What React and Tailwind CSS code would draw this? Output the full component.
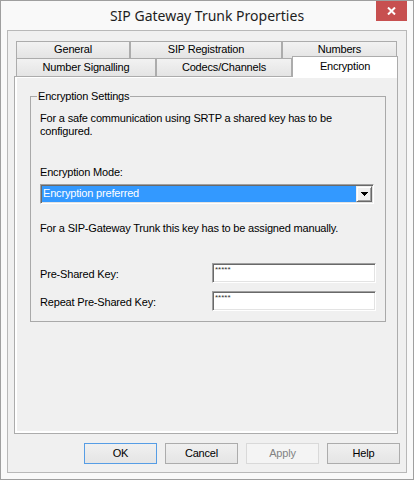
import React from "react"

const sunken =
  "border border-t-[#a0a0a0] border-l-[#a0a0a0] border-r-white border-b-white shadow-[inset_1px_1px_0_#696969,inset_-1px_-1px_0_#e3e3e3]"

const BackTab = ({ label, className }) => (
  <div
    className={`flex justify-center border-x border-t border-[#acacac] bg-linear-to-b from-[#f2f2f2] to-[#e4e4e4] ${className}`}
  >
    {label}
  </div>
)

const KeyField = ({ label, className }) => (
  <div className={`flex items-center justify-between ${className}`}>
    <span className="pt-[3px]">{label}</span>
    <div className={`w-[164px] h-[20px] bg-white pl-[2px] pt-[2px] text-[8px] leading-none tracking-normal text-[#333] ${sunken}`}>
      *****
    </div>
  </div>
)

const DlgButton = ({ label, tone = "normal" }) => {
  const tones = {
    normal: "border-[#acacac] bg-linear-to-b from-[#f0f0f0] to-[#e5e5e5] text-black",
    primary: "border-[#569de5] bg-linear-to-b from-[#f0f0f0] to-[#e5e5e5] text-black",
    disabled: "border-[#d9d9d9] bg-[#f4f4f4] text-[#838383]",
  }
  return (
    <button className={`w-[73px] h-[21px] border flex items-center justify-center ${tones[tone]}`}>
      {label}
    </button>
  )
}

export default function App() {
  return (
    <div className="w-[414px] h-[480px] border border-[#9f9f9f] bg-[#f9f9f9] flex flex-col font-['Liberation_Sans',Arial,sans-serif] text-[11px] leading-[13px] text-black tracking-[-0.18px]">
      {/* title bar */}
      <div className="h-[29px] grid grid-cols-[1fr_auto_1fr]">
        <div />
        <div className="font-['Noto_Sans',sans-serif] text-[14px] leading-[30px] text-[#1e1e1e] tracking-normal">
          SIP Gateway Trunk Properties
        </div>
        <div className="flex justify-end items-start pr-[6px]">
          <button className="w-[31px] h-[20px] bg-[#c75050] flex items-center justify-center">
            <svg width="9" height="8" viewBox="0 0 9 8">
              <path d="M1 0.5 L8 7.5 M8 0.5 L1 7.5" stroke="#fff" strokeWidth="2" />
            </svg>
          </button>
        </div>
      </div>

      {/* client area */}
      <div className="flex-1 mx-[6px] mb-[6px] border border-[#b8b8b8] bg-[#f0f0f0] flex flex-col px-[6px] pt-[10px]">
        {/* tabs */}
        <div className="flex ml-[2px] h-[17px]">
          <BackTab label="General" className="w-[114px] pt-[1px]" />
          <BackTab label="SIP Registration" className="w-[152px] pt-[1px]" />
          <BackTab label="Numbers" className="w-[115px] pt-[1px]" />
        </div>
        <div className="flex ml-[2px] h-[18px]">
          <BackTab label="Number Signalling" className="w-[140px] h-[18px] pt-[2px]" />
          <BackTab label="Codecs/Channels" className="w-[136px] h-[18px] pt-[2px]" />
          <div className="relative z-10 -mt-[2px] w-[106px] h-[21px] flex justify-center pt-[3px] bg-white border-x border-t border-[#acacac]">
            Encryption
          </div>
        </div>

        {/* tab page */}
        <div className="w-[384px] h-[358px] border border-[#acacac] bg-[#f0f0f0] shadow-[inset_2px_0_0_#fff,inset_0_-2px_0_#fff,inset_0_1px_0_#fff] pt-[19px] pl-[15px]">
          <div className="w-[356px] border border-[#a9a9a9] pb-[10px]">
            <div className="-mt-[7px] ml-[6px] px-[1px] w-fit bg-[#f0f0f0]">Encryption Settings</div>
            <div className="px-[9px]">
              <p className="mt-[9px]">
                For a safe communication using SRTP a shared key has to be
                <br />
                configured.
              </p>
              <div className="mt-[28px]">Encryption Mode:</div>
              <div className={`mt-[5px] w-[334px] h-[20px] bg-white p-[1px] flex ${sunken}`}>
                <div className="flex-1 bg-[#3399ff] text-white pl-[1px] pt-[1px]">Encryption preferred</div>
                <div className="w-[16px] bg-[#f0f0f0] border border-t-[#f0f0f0] border-l-[#f0f0f0] border-r-[#696969] border-b-[#696969] shadow-[inset_1px_1px_0_#fff,inset_-1px_-1px_0_#a0a0a0] flex items-center justify-center">
                  <svg width="7" height="4" viewBox="0 0 7 4" shapeRendering="crispEdges">
                    <path d="M0 0h7L3.5 4z" fill="#000" />
                  </svg>
                </div>
              </div>
              <p className="mt-[18px]">For a SIP-Gateway Trunk this key has to be assigned manually.</p>
              <KeyField label="Pre-Shared Key:" className="mt-[28px]" />
              <KeyField label="Repeat Pre-Shared Key:" className="mt-[8px]" />
            </div>
          </div>
        </div>

        {/* buttons */}
        <div className="mt-[9px] flex justify-end gap-[8px]">
          <DlgButton label="OK" tone="primary" />
          <DlgButton label="Cancel" />
          <DlgButton label="Apply" tone="disabled" />
          <DlgButton label="Help" />
        </div>
      </div>
    </div>
  )
}
